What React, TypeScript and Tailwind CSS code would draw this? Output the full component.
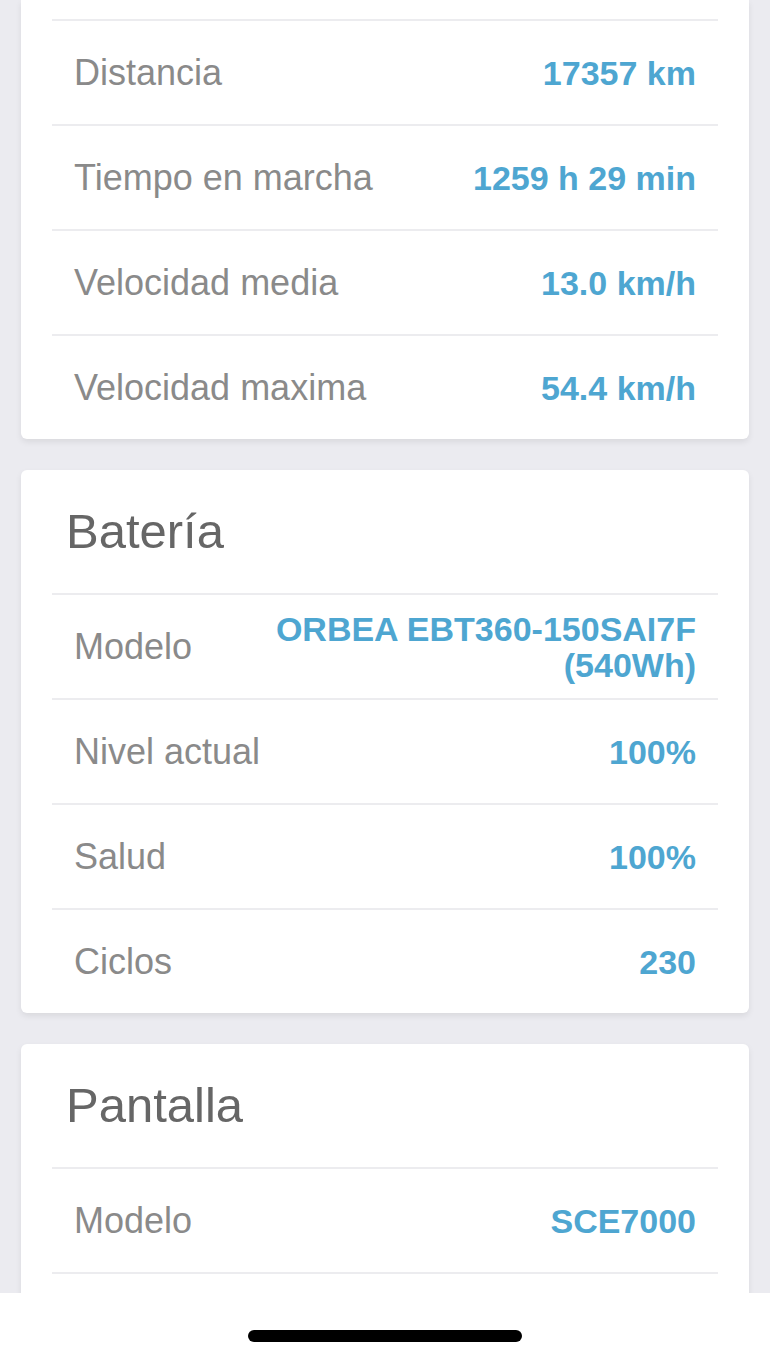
import React from 'react';

type Row = { label: string; value: string };

const viaje: Row[] = [
  { label: 'Distancia', value: '17357 km' },
  { label: 'Tiempo en marcha', value: '1259 h 29 min' },
  { label: 'Velocidad media', value: '13.0 km/h' },
  { label: 'Velocidad maxima', value: '54.4 km/h' },
];

const bateria: Row[] = [
  { label: 'Modelo', value: 'ORBEA EBT360-150SAI7F (540Wh)' },
  { label: 'Nivel actual', value: '100%' },
  { label: 'Salud', value: '100%' },
  { label: 'Ciclos', value: '230' },
];

const pantalla: Row[] = [{ label: 'Modelo', value: 'SCE7000' }];

const InfoRow: React.FC<{ row: Row }> = ({ row }) => (
  <div className="mx-[31px] flex h-[105px] items-center justify-between border-t-2 border-[#ececef] px-[22px]">
    <span className="text-[36px] text-[#8a8a8a]">{row.label}</span>
    <span className="max-w-[430px] text-right text-[34px] leading-[36px] font-bold text-[#4ea6d1]">
      {row.value}
    </span>
  </div>
);

const Card: React.FC<{ title?: string; rows: Row[]; cut?: boolean; more?: boolean }> = ({
  title,
  rows,
  cut,
  more,
}) => (
  <div
    className={`mx-[21px] bg-white shadow-[0_3px_6px_rgba(0,0,0,0.08)] ${
      cut ? 'rounded-b-[6px] pt-[19px]' : 'rounded-[6px]'
    }`}
  >
    {title && (
      <div className="flex h-[123px] items-center px-[45px]">
        <h2 className="text-[49px] text-[#666666]">{title}</h2>
      </div>
    )}
    {rows.map(r => (
      <InfoRow key={r.label} row={r} />
    ))}
    {/* next row continues below the home bar */}
    {more && <div className="mx-[31px] h-[105px] border-t-2 border-[#ececef]" />}
  </div>
);

const App: React.FC = () => {
  return (
    <div className="flex h-[1357px] w-[770px] flex-col bg-[#ebebf0] font-['Liberation_Sans',Arial,sans-serif]">
      {/* Scroll content */}
      <div className="flex h-[1293px] flex-col gap-[31px] overflow-hidden">
        <Card rows={viaje} cut />
        <Card title="Batería" rows={bateria} />
        <Card title="Pantalla" rows={pantalla} more />
      </div>

      {/* Home indicator */}
      <div className="flex h-[64px] items-start justify-center bg-white pt-[37px]">
        <div className="h-[12px] w-[274px] rounded-full bg-black" />
      </div>
    </div>
  );
};

export default App;
